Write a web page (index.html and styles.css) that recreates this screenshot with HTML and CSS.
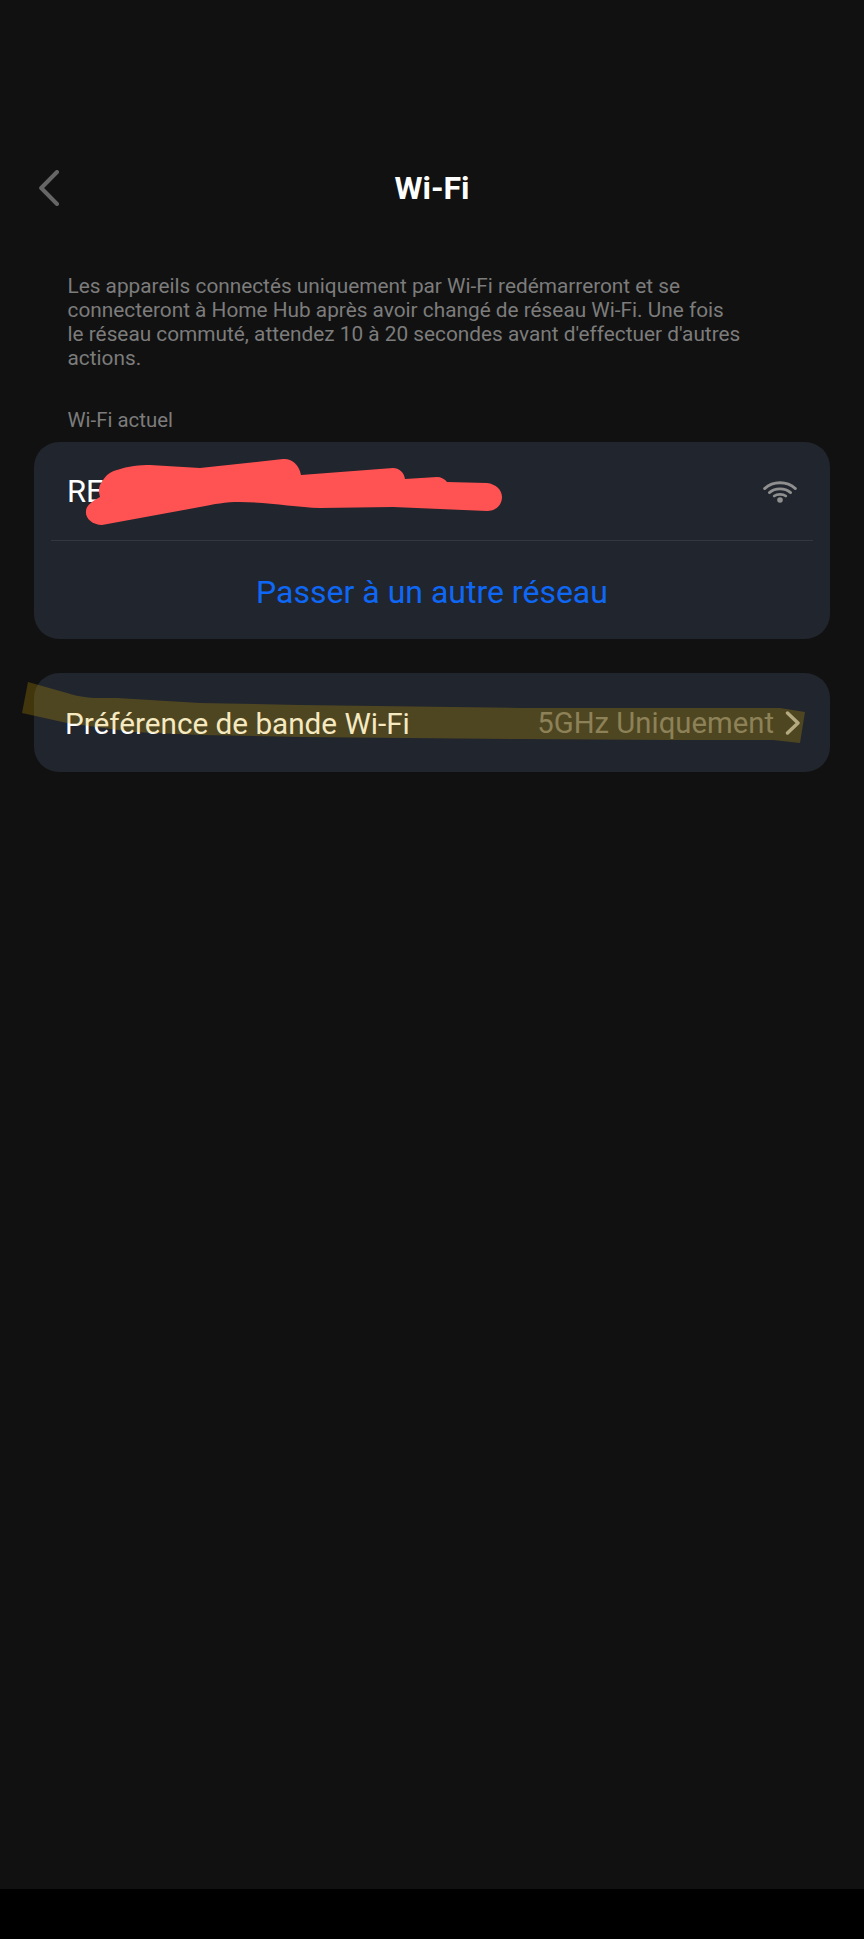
FILE: index.html
```html
<!DOCTYPE html>
<html lang="fr">
<head>
  <meta charset="UTF-8">
  <meta name="viewport" content="width=device-width, initial-scale=1.0">
  <title>Wi-Fi</title>
  <link rel="stylesheet" href="styles.css">
</head>
<body>
  <div class="screen">
    <header class="top-bar">
      <svg class="back-icon" width="24" height="36" viewBox="0 0 24 36" fill="none">
        <path d="M20 2 L4.2 18 L20 34" stroke="#666" stroke-width="4" stroke-linecap="round" stroke-linejoin="round"/>
      </svg>
      <h1>Wi-Fi</h1>
    </header>

    <main class="content">
      <p class="intro">Les appareils connectés uniquement par Wi-Fi redémarreront et se<br>connecteront à Home Hub après avoir changé de réseau Wi-Fi. Une fois<br>le réseau commuté, attendez 10 à 20 secondes avant d'effectuer d'autres<br>actions.</p>
      <div class="section-label">Wi-Fi actuel</div>

      <section class="card">
        <div class="network-row">
          <span class="network-name">RE</span>
          <svg class="wifi-icon" width="34" height="22" viewBox="0 0 34 22" fill="none" stroke="#8f8f8f" stroke-width="2.8" stroke-linecap="round">
            <path d="M1.6 7.6 C10 -0.2 24 -0.2 32.4 7.6"/>
            <path d="M6.4 11.6 C12 6.6 22 6.6 27.6 11.6"/>
            <path d="M11.2 15 C14 12.8 20 12.8 22.8 15"/>
            <circle cx="17" cy="19" r="2.8" fill="#8f8f8f" stroke="none"/>
          </svg>
        </div>
        <div class="switch-row">Passer à un autre réseau</div>
      </section>

      <section class="card band-card">
        <span class="band-label">Préférence de bande Wi-Fi</span>
        <span class="band-value">5GHz Uniquement</span>
        <svg class="chevron" width="16" height="26" viewBox="0 0 16 26" fill="none">
          <path d="M3.5 3 L14 13 L3.5 23" stroke="#aaa" stroke-width="3.4" stroke-linecap="round" stroke-linejoin="round"/>
        </svg>
      </section>
    </main>

    <div class="nav-strip"></div>

    <!-- marks drawn on top of the screenshot -->
    <svg class="scribbles" width="864" height="1939" viewBox="0 0 864 1939">
      <path fill="#ff5252" d="M102 525 C92 525 85 518 86 511 C86 506 92 501 100 497 C98 490 99 485 102 482 C106 474 112 471 117 470 C128 466 140 465 150 465 L200 468 L283 459 C290 458 299 463 301 475 L393 468 C399 468 404 472 405 479 L437 477 C441 477 445 479 447 482 L487 483 C496 484 502 490 502 497 C502 505 496 511 487 511 L393 507 L320 508 C295 507 265 502 240 502 C225 502 215 504 200 507 Z"/>
      <path fill="rgba(216,168,0,.25)" d="M28 682 L67 693 C85 699 100 698 117 698 L200 703 L300 705 L520 708 L780 708 L805 712 L800 743 L773 740 L670 740 L520 739 L300 737 L200 735 L133 732 L67 723 L22 713 Z"/>
    </svg>
  </div>
</body>
</html>
```

FILE: styles.css
```css
* {
  margin: 0;
  padding: 0;
  box-sizing: border-box;
}

body {
  background-color: #000;
  font-family: Roboto, 'Liberation Sans', sans-serif;
}

.screen {
  position: relative;
  width: 864px;
  height: 1939px;
  display: flex;
  flex-direction: column;
  background-color: #111;
  overflow: hidden;
}

.top-bar {
  position: relative;
  height: 60px;
  margin-top: 158px;
  display: flex;
  align-items: center;
  justify-content: center;
}

.top-bar h1 {
  font-size: 32px;
  font-weight: 700;
  color: #fff;
}

.back-icon {
  position: absolute;
  left: 37px;
  top: 12px;
}

.content {
  flex: 1;
  padding: 56px 34px 0;
}

.intro {
  padding-left: 33.5px;
  font-size: 20.8px;
  line-height: 24px;
  color: #7c7c7c;
}

.section-label {
  margin-top: 38px;
  margin-bottom: 10px;
  padding-left: 33.5px;
  font-size: 20.4px;
  line-height: 24px;
  color: #7c7c7c;
}

.card {
  background-color: #21252d;
  border-radius: 25px;
}

.network-row {
  height: 99px;
  margin: 0 17px;
  padding: 1px 16px 0 16px;
  display: flex;
  align-items: center;
  justify-content: space-between;
  border-bottom: 1px solid #33373f;
}

.network-name {
  font-size: 31px;
  color: #fff;
}

.switch-row {
  height: 98px;
  padding-top: 4px;
  display: flex;
  align-items: center;
  justify-content: center;
  font-size: 32px;
  color: #0e68f5;
}

.band-card {
  height: 99px;
  margin-top: 34px;
  padding: 1px 30px 0 31px;
  display: flex;
  align-items: center;
}

.band-label {
  flex: 1;
  font-size: 29.7px;
  color: #fff;
}

.band-value {
  font-size: 29.3px;
  color: #757575;
}

.chevron {
  margin-left: 10px;
}

.nav-strip {
  height: 50px;
  background-color: #000;
}

.scribbles {
  position: absolute;
  left: 0;
  top: 0;
  pointer-events: none;
}
```
